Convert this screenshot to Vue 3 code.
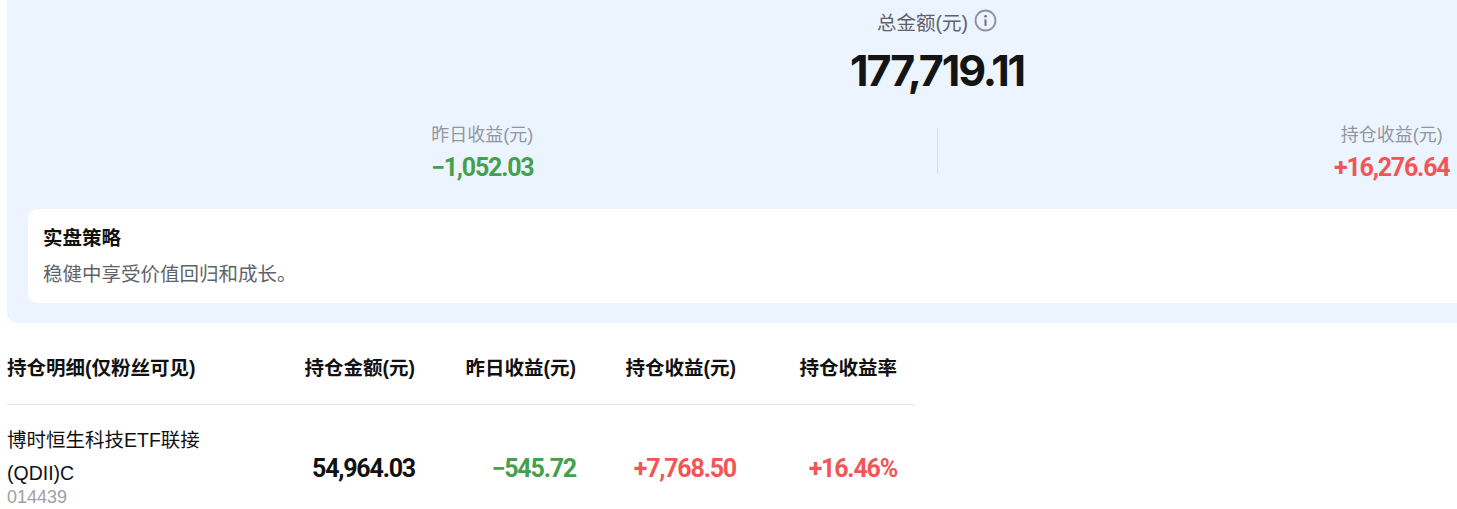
<script setup>
const positions = [
  {
    name: '博时恒生科技ETF联接(QDII)C',
    code: '014439',
    amount: '54,964.03',
    yesterday: '−545.72',
    profit: '+7,768.50',
    rate: '+16.46%'
  }
]
</script>

<template>
  <div class="page">
    <section class="summary">
      <div class="total-label">
        <span>总金额(元)</span>
        <svg class="info" width="23" height="23" viewBox="0 0 24 24" fill="none">
          <circle cx="12" cy="12" r="10.4" stroke="#8d939c" stroke-width="1.9" />
          <circle cx="12" cy="7.6" r="1.4" fill="#6f757e" />
          <path d="M12 10.8v6.8" stroke="#6f757e" stroke-width="2.2" />
        </svg>
      </div>
      <div class="total-value">177,719.11</div>
      <div class="stats">
        <div class="stat">
          <div class="stat-label">昨日收益(元)</div>
          <div class="stat-value down">−1,052.03</div>
        </div>
        <div class="divider"></div>
        <div class="stat">
          <div class="stat-label">持仓收益(元)</div>
          <div class="stat-value up">+16,276.64</div>
        </div>
      </div>
      <div class="strategy">
        <div class="strategy-title">实盘策略</div>
        <div class="strategy-text">稳健中享受价值回归和成长。</div>
      </div>
    </section>

    <section class="holdings">
      <div class="row head">
        <div class="name-col">持仓明细(仅粉丝可见)</div>
        <div>持仓金额(元)</div>
        <div>昨日收益(元)</div>
        <div>持仓收益(元)</div>
        <div class="last">持仓收益率</div>
      </div>
      <div v-for="item in positions" :key="item.code" class="row body">
        <div class="name-col fund">
          <div class="fund-name">{{ item.name }}</div>
          <div class="fund-code">{{ item.code }}</div>
        </div>
        <div class="num amount">{{ item.amount }}</div>
        <div class="num down">{{ item.yesterday }}</div>
        <div class="num up">{{ item.profit }}</div>
        <div class="num up last">{{ item.rate }}</div>
      </div>
    </section>
  </div>
</template>

<style>
html,
body {
  margin: 0;
  background: #fff;
  overflow: hidden;
}
</style>

<style scoped>
.page {
  width: 1457px;
  height: 509px;
  overflow: hidden;
  padding-left: 7px;
  box-sizing: border-box;
  font-family: "Liberation Sans", "Noto Sans CJK SC", sans-serif;
  color: #111;
}

.summary {
  width: 1860px;
  height: 323px;
  box-sizing: border-box;
  padding: 8px 21px 0;
  background: #ecf4ff;
  border-radius: 0 0 10px 10px;
}

.total-label {
  display: flex;
  justify-content: center;
  align-items: center;
  gap: 6px;
  height: 26px;
  font-size: 19.5px;
  color: #5f6368;
}

.info {
  margin-top: -2px;
}

.total-value {
  margin-top: 9px;
  text-align: center;
  font-family: Inter, sans-serif;
  font-size: 43px;
  line-height: 54px;
  letter-spacing: -2.1px;
  font-weight: 700;
  color: #141414;
}

.stats {
  display: grid;
  grid-template-columns: 1fr 1px 1fr;
  margin-top: 26px;
}

.stat {
  text-align: center;
}

.divider {
  height: 45px;
  margin-top: 5px;
  background: #d5dde6;
}

.stat-label {
  font-size: 18px;
  line-height: 24px;
  color: #93979d;
}

.stat-value {
  margin-top: 8px;
  font-family: Roboto, sans-serif;
  font-size: 25px;
  line-height: 26px;
  letter-spacing: -1.2px;
  font-weight: 700;
}

.down {
  color: #44a04c;
}

.up {
  color: #f25555;
}

.strategy {
  margin-top: 28px;
  height: 94px;
  box-sizing: border-box;
  padding: 15px;
  background: #fff;
  border-radius: 10px;
}

.strategy-title {
  font-size: 19.5px;
  line-height: 28px;
  font-weight: 700;
}

.strategy-text {
  margin-top: 8px;
  font-size: 19.5px;
  line-height: 28px;
  color: #5f6368;
}

.holdings {
  width: 908px;
}

.row {
  display: grid;
  grid-template-columns: 248px 160px 161px 160px 179px;
  text-align: right;
}

.head {
  height: 82px;
  box-sizing: border-box;
  padding-top: 6px;
  align-items: center;
  font-size: 19.5px;
  font-weight: 700;
  border-bottom: 1px solid #e6e6e6;
}

.body {
  height: 126px;
  align-items: center;
}

.name-col {
  text-align: left;
}

.fund {
  align-self: start;
  padding-top: 19px;
}

.last {
  padding-right: 18px;
}

.fund-name {
  width: 210px;
  font-size: 19.5px;
  line-height: 33px;
}

.fund-code {
  font-size: 18px;
  line-height: 14px;
  color: #a0a0a0;
}

.num {
  font-family: Roboto, sans-serif;
  font-size: 25px;
  letter-spacing: -1.2px;
  font-weight: 700;
}

.amount {
  color: #111;
}
</style>
